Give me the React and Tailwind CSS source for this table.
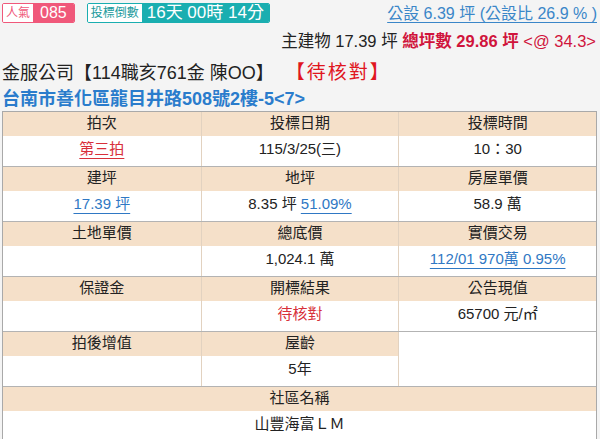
const font = "font-['Liberation_Sans','Noto_Sans_CJK_TC',sans-serif]";

function Head({ children, className = "" }) {
  return (
    <div className={`h-[24px] pb-[2px] bg-[#f5e0c9] flex items-center justify-center text-[15px] text-[#222] ${className}`}>
      {children}
    </div>
  );
}

function Cell({ children, className = "" }) {
  return (
    <div className={`h-[30px] pb-[4px] bg-white flex items-center justify-center text-[15px] text-[#222] ${className}`}>
      {children}
    </div>
  );
}

const link = "text-[#2f78c4] underline decoration-[#2f78c4] underline-offset-[4px]";
const vline = "border-l border-[#e2d2c0]";

export default function App() {
  const rows = [
    [
      ["拍次", <span className="text-[#d8303a] underline decoration-[#d8303a] underline-offset-[4px]">第三拍</span>],
      ["投標日期", "115/3/25(三)"],
      ["投標時間", "10：30"],
    ],
    [
      ["建坪", <span className={link}>17.39 坪</span>],
      ["地坪", <span>8.35 坪 <span className={link}>51.09%</span></span>],
      ["房屋單價", "58.9 萬"],
    ],
    [
      ["土地單價", ""],
      ["總底價", "1,024.1 萬"],
      ["實價交易", <span className={link}>112/01 970萬 0.95%</span>],
    ],
    [
      ["保證金", ""],
      ["開標結果", <span className="text-[#d8303a]">待核對</span>],
      ["公告現值", "65700 元/㎡"],
    ],
  ];

  return (
    <div className={`w-[600px] h-[439px] bg-[#f4f4f4] overflow-hidden ${font}`}>
      <div className="flex items-start justify-between pt-[3px] pl-[2px] pr-[3px] h-[28px]">
        <div className="flex items-center gap-[12px]">
          <div className="flex h-[20px] rounded-[2px] overflow-hidden border border-[#f0587a]">
            <span className="bg-white text-[#f0587a] text-[12px] px-[3px] flex items-center">人氣</span>
            <span className="bg-[#f0587a] text-white text-[16px] px-[7px] flex items-center">085</span>
          </div>
          <div className="flex h-[20px] rounded-[2px] overflow-hidden border border-[#1aaeb0]">
            <span className="bg-white text-[#1a9a9c] text-[12px] px-[3px] flex items-center">投標倒數</span>
            <span className="bg-[#1aaeb0] text-white text-[17px] px-[5px] flex items-center">16天 00時 14分</span>
          </div>
        </div>
        <span className="text-[16px] leading-[22px] text-[#3a86c8] underline decoration-[#3a86c8] underline-offset-[3px]">
          公設 6.39 坪 (公設比 26.9 % )
        </span>
      </div>
      <div className="flex justify-end pr-[4px] h-[26px] items-center text-[16.5px] leading-[22px]">
        <span className="text-[#222]">主建物 17.39 坪&nbsp;</span>
        <span className="text-[#d0143c] font-bold">總坪數 29.86 坪&nbsp;</span>
        <span className="text-[#d0143c]">&lt;@ 34.3&gt;</span>
      </div>
      <div className="flex items-center pl-[2px] h-[34px] pt-[4px] text-[18px] leading-[24px]">
        <span className="text-[#222]">金服公司【114職亥761金 陳OO】</span>
        <span className="text-[#e0161e] text-[19px] ml-[12px] tracking-[2px]">【待核對】</span>
      </div>
      <div className="pl-[2px] h-[23px] text-[18px] leading-[22px] font-bold text-[#2a7ccc]">
        台南市善化區龍目井路508號2樓-5&lt;7&gt;
      </div>
      <div className="mx-[2px] w-[595px] border border-[#a9a9a9]">
        {rows.map((row, i) => (
          <div key={i} className={`grid grid-cols-3 ${i > 0 ? "border-t border-[#b3b3b3]" : ""}`}>
            {row.map(([h], j) => (
              <Head key={"h" + j} className={j > 0 ? vline : ""}>{h}</Head>
            ))}
            {row.map(([, v], j) => (
              <Cell key={"c" + j} className={j > 0 ? vline : ""}>{v}</Cell>
            ))}
          </div>
        ))}
        <div className="grid grid-cols-3 border-t border-[#b3b3b3]">
          <Head>拍後增值</Head>
          <Head className={vline}>屋齡</Head>
          <div className={`row-span-2 bg-white ${vline}`}></div>
          <Cell className="h-[26px]"></Cell>
          <Cell className={`h-[26px] ${vline}`}>5年</Cell>
        </div>
        <div className="border-t border-[#b3b3b3]">
          <Head className="h-[23px]">社區名稱</Head>
          <Cell className="h-[29px] pb-[3px]">山豐海富ＬＭ</Cell>
        </div>
      </div>
    </div>
  );
}
